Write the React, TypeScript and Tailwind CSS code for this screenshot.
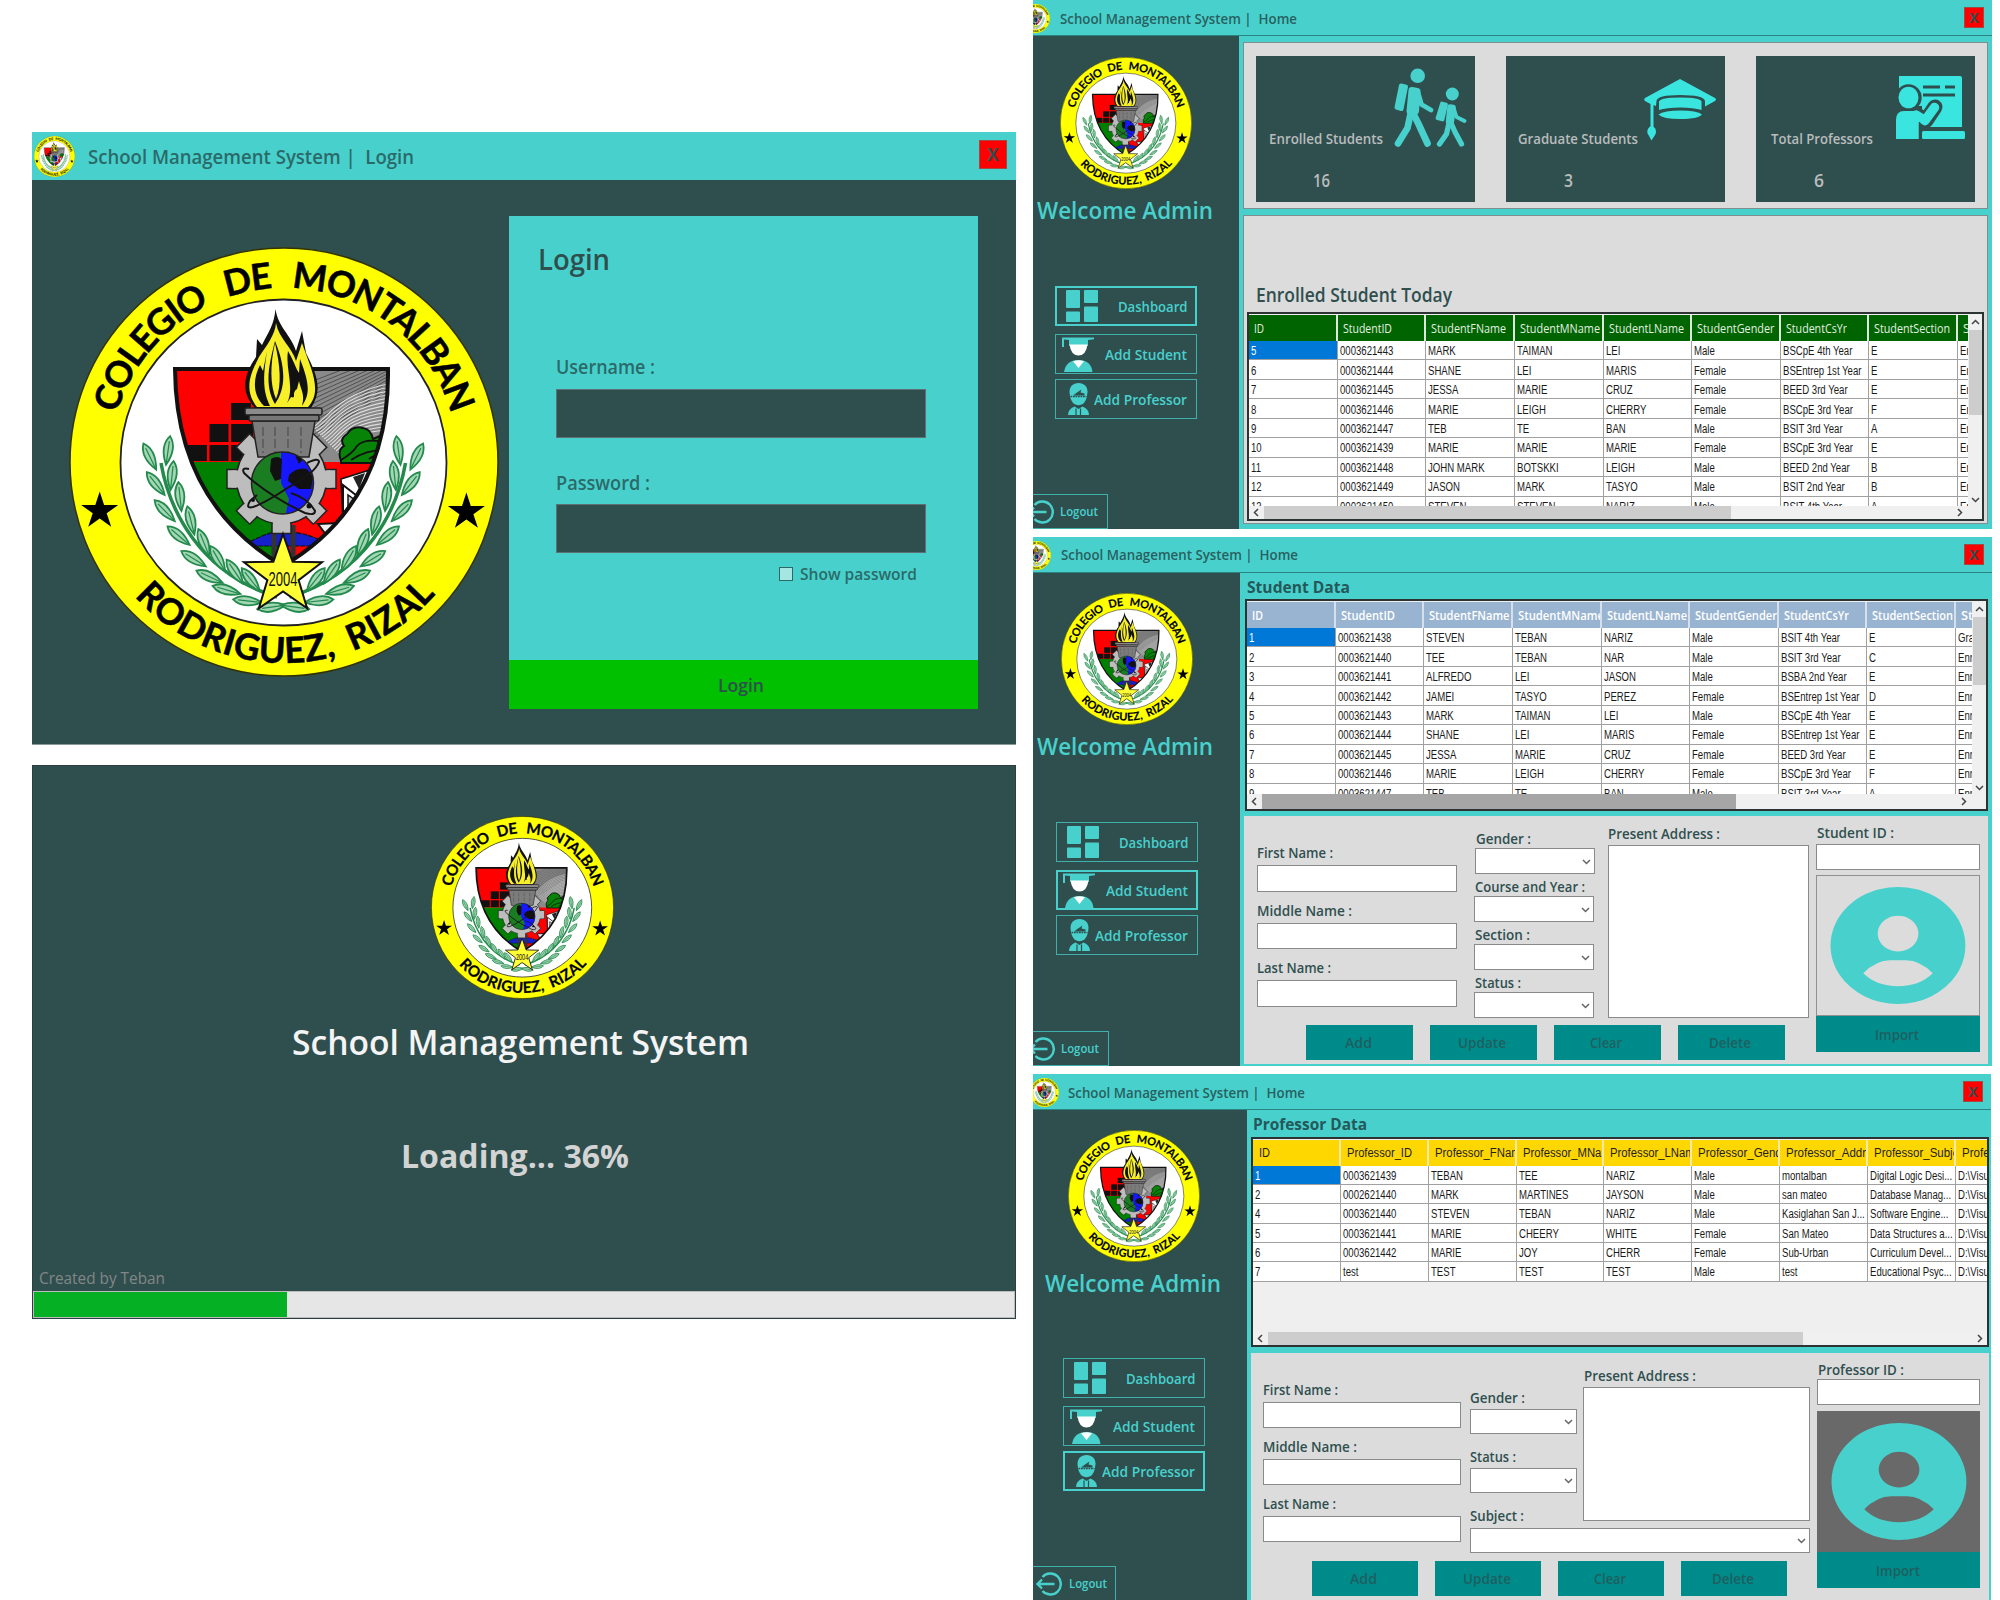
import React, { useLayoutEffect, useRef, useState } from "react";
import clsx from "clsx";

/* A single line of text squeezed or stretched to a given width. */
function Fit({ w, className, children }: { w: number; className?: string; children: React.ReactNode }) {
  const ref = useRef<HTMLSpanElement>(null);
  const [scale, setScale] = useState(1);
  useLayoutEffect(() => {
    if (ref.current && ref.current.offsetWidth) setScale(w / ref.current.getBoundingClientRect().width);
  }, []);
  return (
    <span className={clsx("block whitespace-pre", className)} style={{ width: w }}>
      <span ref={ref} className="inline-block origin-left" style={{ transform: `scaleX(${scale})` }}>
        {children}
      </span>
    </span>
  );
}

function starPoints(cx: number, cy: number, r: number, inner = 0.38) {
  return Array.from({ length: 10 }, (_, i) => {
    const a = -Math.PI / 2 + (i * Math.PI) / 5;
    const q = i % 2 ? r * inner : r;
    return `${(cx + q * Math.cos(a)).toFixed(1)},${(cy + q * Math.sin(a)).toFixed(1)}`;
  }).join(" ");
}

const LEAVES: [number, number, number][] = [
  [81, 210, 64], [87, 237, 52], [96, 264, 46], [110, 289, 40], [125, 312, 32], [141, 330, 25], [158, 343, 16], [179, 354, 6], [203, 360, -8],
  [99, 204, 98], [103, 229, 96], [111, 250, 84], [122, 274, 76], [135, 296, 68], [149, 312, 60], [166, 325, 56], [182, 333, 52],
];

function Laurel() {
  return (
    <g fill="#a2d6b4" stroke="#238a4c" strokeWidth="1.8">
      <path d="M92 216 C100 262 130 326 208 350" fill="none" strokeWidth="3.500" />
      {LEAVES.map(([x, y, a], i) => (
        <g key={i} transform={`translate(${x} ${y}) rotate(${a})`}>
          <path d="M-15 0 Q-4 -9 14 0 Q-4 9 -15 0Z" />
          <path d="M-10 0 H12" strokeWidth="1.200" />
        </g>
      ))}
    </g>
  );
}

const TEETH = Array.from({ length: 8 }, (_, i) => i * 45);

function Seal({ id, className }: { id: string; className?: string }) {
  return (
    <svg viewBox="0 0 430 430" className={clsx("block shrink-0", className)}>
      <defs>
        <path id={`${id}-top`} d="M41 215 A174 174 0 0 1 389 215" />
        <path id={`${id}-bottom`} d="M14 215 A201 201 0 0 0 416 215" />
        <clipPath id={`${id}-shield`}>
          <path d="M106 122 H319 Q321 256 214 319 Q107 256 106 122Z" />
        </clipPath>
        <clipPath id={`${id}-globe`}>
          <circle cx="213.500" cy="236" r="31" />
        </clipPath>
      </defs>
      <circle cx="215" cy="215" r="214" fill="#ffff00" stroke="#333300" strokeWidth="1.5" />
      <circle cx="214.500" cy="215.500" r="163" fill="#fff" stroke="#222" strokeWidth="1.8" />
      <g fontFamily="Lato, 'Open Sans', sans-serif" fontWeight="700" fontSize="36" fill="#000" stroke="#000" strokeWidth="0.5">
        <text textLength="449" lengthAdjust="spacing" wordSpacing="13">
          <textPath href={`#${id}-top`} startOffset="49">COLEGIO DE MONTALBAN</textPath>
        </text>
        <text textLength="340" lengthAdjust="spacing" wordSpacing="7">
          <textPath href={`#${id}-bottom`} startOffset="147">RODRIGUEZ, RIZAL</textPath>
        </text>
      </g>
      <polygon points={starPoints(30.700, 264, 19.500)} />
      <polygon points={starPoints(397.400, 265, 19.500)} />

      <Laurel />
      <g transform="translate(428.500 0) scale(-1 1)">
        <Laurel />
      </g>

      <g clipPath={`url(#${id}-shield)`}>
        <rect x="100" y="118" width="114" height="98" fill="#ff0000" />
        <rect x="100" y="215" width="114" height="110" fill="#008000" />
        <rect x="213" y="118" width="110" height="98" fill="#8a8a8a" />
        <rect x="213" y="215" width="110" height="110" fill="#ff0000" />
        <g fill="#111">
          <rect x="162" y="156" width="20" height="17" />
          <rect x="140.500" y="177" width="19" height="18" />
          <rect x="162" y="177" width="22" height="18" />
          <rect x="119" y="198" width="19" height="16" />
          <rect x="140.500" y="198" width="19" height="16" />
          <rect x="162" y="198" width="22" height="16" />
        </g>
        <g fill="none" stroke="#4a4a4a" strokeWidth="0.9">
          {Array.from({ length: 14 }, (_, i) => (
            <path key={i} d={`M244 ${134 + i * 4.500} L322 ${104 + i * 3}`} />
          ))}
        </g>
        <g fill="none" stroke="#dedede" strokeWidth="1.1">
          {Array.from({ length: 14 }, (_, i) => (
            <path key={i} d={`M${243 + i * 2} ${180 + i * 2} C${256 + i * 2} ${176 + i * 1.500} ${266 + i} ${146 + i * 3} ${324} ${136 + i * 3.600}`} />
          ))}
        </g>
        <path d="M272 214 Q268 203 275 199 Q270 192 278 187 Q284 178 294 181 Q302 182 304 192 L322 184 V216 H272Z" fill="#078307" stroke="#111" strokeWidth="2" />
        <path d="M272 213 Q284 206 288 199 Q296 190 320 196 M282 213 Q298 202 320 203 M300 212 Q308 206 320 209" fill="none" stroke="#111" strokeWidth="1.800" />
        <path d="M272 232 L304 222 L300 250 L274 274Z" fill="#fff" stroke="#111" strokeWidth="1.600" />
        <path d="M284 230 L296 226 L290 242Z" fill="#222" />
        <path d="M274 238 V268 L292 252Z" fill="#fff" stroke="#111" strokeWidth="2" />
        <path d="M279 248 V260 L286 253Z" fill="#ccc" stroke="#111" strokeWidth="1.500" />
        <path d="M249 277 L270 276 L258 289Z" fill="#eee" stroke="#111" strokeWidth="2" />
        <path d="M176 297 Q198 286 206 285 L222 285 Q236 286 254 294 L250 299 H178Z" fill="#1620cc" stroke="#111" strokeWidth="1.200" strokeDasharray="5 1" />
        <path d="M205 278 V320 M224 278 V320" stroke="#333" strokeWidth="5" />
      </g>
      <path d="M106 122 H319 Q321 256 214 319 Q107 256 106 122Z" fill="none" stroke="#111" strokeWidth="4" />

      <g fill="#bdbdbd" stroke="#222" strokeWidth="1.500">
        {TEETH.map((a) => (
          <rect key={a} x="203" y="177.500" width="19" height="16" transform={`rotate(${a} 212.500 232)`} />
        ))}
        <circle cx="212.500" cy="232" r="45" />
        {TEETH.map((a) => (
          <rect key={a} x="204" y="182" width="17" height="18" stroke="none" transform={`rotate(${a} 212.500 232)`} />
        ))}
      </g>
      <path d="M183 174 H246 L240 210 H189Z" fill="#7c7c7c" stroke="#222" strokeWidth="1.500" />
      <path d="M194 180 V206 M206 180 V208 M219 180 V208 M232 180 V206" stroke="#5a5a5a" strokeWidth="1.600" strokeDasharray="9 3" />
      <rect x="176" y="161" width="77" height="7" rx="2" fill="#8b8b8b" stroke="#222" strokeWidth="1.500" />
      <rect x="180" y="168" width="70" height="6" rx="2" fill="#777" stroke="#222" strokeWidth="1.500" />
      <g clipPath={`url(#${id}-globe)`}>
        <rect x="180" y="200" width="66" height="70" fill="#1b7d22" />
        <path d="M212 200 H250 V270 H216 L220 252 L212 236Z" fill="#1717ff" />
        <path d="M202 212 Q208 208 213 212 L212 232 L206 234 L201 224Z M220 228 Q228 220 238 222 L244 230 L242 242 L230 242 L219 234Z M226 208 L234 212 L230 217Z" fill="#111" />
      </g>
      <circle cx="213.500" cy="236" r="31" fill="none" stroke="#222" strokeWidth="1.500" />
      <g fill="none" stroke="#151515" strokeWidth="2">
        <path d="M180 222 Q172 220 175 226 Q198 248 236 266 Q246 269 246 264 Q240 252 222 246" />
        <path d="M238 216 Q250 210 250 215 Q246 226 220 240 Q196 256 184 260 Q176 262 181 254 L188 248" />
      </g>
      <circle cx="240" cy="259" r="2.500" fill="#111" />
      <circle cx="184" cy="253" r="2" fill="#111" />

      <path d="M186 161 C170 144 176 126 187 110 L188 92 L193 98 C200 84 205 78 206.500 62 C209 80 222 88 227 104 L233 84 L237 106 C248 128 254 142 242 161Z" fill="#111" />
      <path d="M188 160 C174 142 182 126 190 110 C198 98 206 88 207 76 C210 92 223 100 227 114 L233 96 C242 122 254 144 239 160Z" fill="#f6ef2a" />
      <path d="M195 159 C182 146 185 130 191 118 L194 124 L198 104 C193 136 195 146 201 159Z M206 157 C195 138 200 118 206 94 C216 118 218 140 206 157Z M218 156 C226 140 216 122 219 104 C226 116 226 120 230 126 L231 112 C242 140 240 148 233 159 C236 146 232 144 230 134 L228 142 C222 146 228 152 222 150Z" fill="#111" />
      <path d="M206 96 C201 118 201 138 207 152 C213 138 211 118 206 96Z" fill="#f6ef2a" />

      <polygon points={starPoints(214, 328, 41, 0.4)} fill="#ffff33" stroke="#111" strokeWidth="2" />
      <text x="214" y="338.500" textAnchor="middle" fontFamily="'Liberation Sans', sans-serif" fontSize="20" textLength="29" lengthAdjust="spacingAndGlyphs" fill="#111">
        2004
      </text>
    </svg>
  );
}

function DashboardIcon() {
  return (
    <svg viewBox="0 0 32 32" className="h-8 w-8" fill="#48d1cc">
      <rect width="14" height="18" rx="1" />
      <rect y="21.500" width="14" height="10.500" rx="1" />
      <rect x="18" width="14" height="13" rx="1" />
      <rect x="18" y="16.500" width="14" height="15.500" rx="1" />
    </svg>
  );
}

function StudentIcon() {
  return (
    <svg viewBox="0 0 32 35" className="h-[35px] w-8" fill="#48d1cc">
      <path d="M0 .5 H32 V2.200 L26 3 V9 H7 V3 L2 2.500 V10 H0Z" />
      <path d="M7.500 7.500 H25.500 Q24 18.500 16.500 18.500 Q9 18.500 7.500 7.500Z" fill="#fff" />
      <path d="M2 35 Q4 23 16.500 23 Q29 23 30.500 35Z" />
      <path d="M11 24.200 Q16.500 22.500 22 24.200 L16.500 31Z" fill="#fff" />
    </svg>
  );
}

function ProfessorIcon() {
  return (
    <svg viewBox="0 0 21 32" className="h-8 w-[21px]" fill="#48d1cc">
      <path d="M10.500 0 C16 0 19.500 3.500 19.500 9 Q19 17 15.500 20.500 Q10.500 24 5.500 20.500 Q2 17 1.500 9 C1.500 3.500 5 0 10.500 0Z" />
      <path d="M5 12.500 L9 9.500 L13.500 6.500 L12.500 9.500 L16.500 10.500 V12.500Z" fill="#2f4f4f" />
      <path d="M2.500 13.500 H18.500" fill="none" stroke="#2f4f4f" strokeWidth="1.600" strokeDasharray="1.800 .7" />
      <path d="M0 32 Q0 26 6.500 23.500 L10.500 26 L14.500 23.500 Q21 26 21 32Z" />
      <path d="M8 25.500 V32 M12.500 25.500 V32 M3.500 23 H6 M15 23 H17.500" stroke="#2f4f4f" strokeWidth="1.200" />
    </svg>
  );
}

function LogoutIcon() {
  return (
    <svg viewBox="0 0 26 24" className="h-6 w-[26px] shrink-0" fill="none" stroke="#48d1cc" strokeWidth="2.400">
      <path d="M6.500 5 A10.500 10.500 0 1 1 6.500 19" />
      <path d="M18.500 12 H1.500 M6 7.500 L1.500 12 L6 16.500" />
    </svg>
  );
}

function WalkersIcon() {
  return (
    <svg viewBox="0 0 73 79" className="h-[79px] w-[73px]" fill="#48d1cc" stroke="#48d1cc" strokeLinecap="round" strokeLinejoin="round">
      <circle cx="23.700" cy="7.800" r="7.300" stroke="none" />
      <path d="M7 17.500 L12 18.700 L7.500 41 L2.500 39.500Z" strokeWidth="4" />
      <path d="M18 22.500 L23 23.500 L21.500 43 L16 43Z" strokeWidth="7" />
      <path d="M23.500 23 L27.500 36.500 L37 42" fill="none" strokeWidth="4.800" />
      <path d="M19 45 L25 57 L33.500 75.500" fill="none" strokeWidth="6.800" />
      <path d="M16.500 46 L13.500 60 L4 75.500" fill="none" strokeWidth="6.600" />
      <circle cx="58.300" cy="26" r="6.500" stroke="none" />
      <path d="M48 35.500 L52 36.600 L48.500 51.500 L43.500 50.200Z" strokeWidth="3.800" />
      <path d="M56 39 L59 39.500 L57.500 53.500 L54.500 53.500Z" strokeWidth="5.400" />
      <path d="M59.500 39.500 L62.500 49 L70.500 53" fill="none" strokeWidth="3.800" />
      <path d="M57 55 L61 64 L67.500 76" fill="none" strokeWidth="5.300" />
      <path d="M55 55 L52.500 66 L45.500 76" fill="none" strokeWidth="5.300" />
    </svg>
  );
}

function CapIcon() {
  return (
    <svg viewBox="0 0 73 62" className="h-[62px] w-[73px]" fill="#3ae5e0">
      <path d="M36 0 L71 19 Q73 20.500 71 22 L61 27.500 V22 Q60 16 36 16 Q13 16 12.500 22 L12 27 L9.500 26 V48 H6.500 V25 L1 22 Q-0.500 20.500 1 19Z" />
      <path d="M15 22.500 Q17 18.500 36 18.500 Q56 18.500 57.500 22.500 V31 Q50 28.500 36.500 28.500 Q22 28.500 15 31Z" />
      <path d="M14.500 35.500 Q20 31.500 36.500 31.500 Q53 31.500 58 35.500 Q54 40 36.500 40 Q19 40 14.500 35.500Z" />
      <path d="M7.500 46.500 L11 49 Q13 53 11 56 L7.500 61.500 L4.500 56 Q2 53 4.500 49Z" />
    </svg>
  );
}

function TeacherIcon() {
  return (
    <svg viewBox="0 0 69 63" className="h-[63px] w-[69px]" fill="#3ae5e0">
      <path d="M3 0 H64 Q66 0 66 2 V52 H33 L27 45 H3Z" />
      <path d="M27 11 H44 M49 11 H59 M27 19 H59" stroke="#2f4f4f" strokeWidth="2.800" />
      <rect x="0" y="30" width="26" height="33" fill="#2f4f4f" />
      <circle cx="12.500" cy="21.500" r="13.200" fill="#2f4f4f" />
      <ellipse cx="12.500" cy="21.500" rx="10" ry="10.800" />
      <path d="M21 39 L30 44.500 L39 31" fill="none" stroke="#2f4f4f" strokeWidth="15" strokeLinecap="round" strokeLinejoin="round" />
      <path d="M20 39 L29 44.500 L38.500 31.500" fill="none" stroke="#3ae5e0" strokeWidth="9.500" strokeLinecap="round" strokeLinejoin="round" />
      <path d="M0 44 Q0 35 8 35 H18 L23 40 V63 H0Z" />
      <path d="M23.500 46 V63" stroke="#2f4f4f" strokeWidth="1.500" />
      <rect x="23" y="51" width="46" height="4" fill="#2f4f4f" />
      <rect x="26" y="55" width="43" height="8" rx="1.500" />
    </svg>
  );
}

function Chevron({ dir, className }: { dir: "left" | "right" | "up" | "down"; className?: string }) {
  const d = { left: "M6 1 L2.500 4.500 L6 8", right: "M3 1 L6.500 4.500 L3 8", up: "M1 6 L4.500 2.500 L8 6", down: "M1 3 L4.500 6.500 L8 3" }[dir];
  return (
    <svg viewBox="0 0 9 9" className={clsx("h-[9px] w-[9px] shrink-0", className)} fill="none" stroke="currentColor" strokeWidth="1.500">
      <path d={d} />
    </svg>
  );
}

function CloseButton({ className }: { className?: string }) {
  return (
    <button className={clsx("flex items-center justify-center border border-[#a04a42] bg-[#ff0000] font-bold text-[#2f4f4f]", className)}>X</button>
  );
}

function LoginWindow() {
  return (
    <section className="flex h-[613px] w-[984px] flex-col border-b border-[#8a9a9a] bg-[#2f4f4f]">
      <header className="flex h-12 shrink-0 bg-[#48d1cc]">
        <Seal id="login-icon" className="mt-[4px] ml-[2px] h-[41px] w-[41px]" />
        <Fit w={326} className="mt-[9px] ml-[13px] text-[19px] leading-[32px] font-semibold text-[#2b6a69]">
          {"School Management System |  Login"}
        </Fit>
        <CloseButton className="mt-[8px] mr-[9px] ml-auto h-[29px] w-[28px] text-[17px]" />
      </header>
      <div className="flex">
        <Seal id="login-seal" className="mt-[67px] ml-[37px] h-[430px] w-[430px]" />
        <div className="mt-[36px] ml-[10px] flex h-[493px] w-[469px] flex-col bg-[#48d1cc]">
          <Fit w={72} className="mt-[23px] ml-[29px] text-[29px] leading-[40px] font-semibold">Login</Fit>
          <div className="mt-[72px] ml-[47px] w-[370px]">
            <Fit w={99} className="text-[19px] leading-[32px] font-semibold text-[#2b6a69]">Username :</Fit>
            <div className="mt-[6px] h-[49px] border border-[#5f6f74] bg-[#2f4f4f]" />
            <Fit w={94} className="mt-[29px] text-[19px] leading-[32px] font-semibold text-[#2b6a69]">Password :</Fit>
            <div className="mt-[5px] h-[49px] border border-[#5f6f74] bg-[#2f4f4f]" />
            <div className="mt-[8px] ml-[223px] flex items-center gap-[7px]">
              <span className="h-[14px] w-[14px] border-[1.500px] border-[#2b6a69] bg-[#a5e6e3]" />
              <Fit w={117} className="text-[17px] leading-[26px] font-semibold text-[#2b6a69]">Show password</Fit>
            </div>
          </div>
          <button className="mt-auto flex h-[49px] items-center justify-center bg-[#00c000]">
            <Fit w={46} className="mr-[5px] text-[18px] leading-[32px] font-semibold">Login</Fit>
          </button>
        </div>
      </div>
    </section>
  );
}

function SplashWindow() {
  return (
    <section className="flex h-[554px] w-[984px] flex-col border border-[#2a3f3f] bg-[#2f4f4f]">
      <Seal id="splash-seal" className="mt-[50px] ml-[398px] h-[183px] w-[183px]" />
      <Fit w={457} className="mt-[18px] ml-[259px] text-[34px] leading-[50px] font-semibold text-[#f4f4f4]">School Management System</Fit>
      <Fit w={228} className="mt-[65px] ml-[368px] text-[32px] leading-[48px] font-bold text-[#d3d3d3]">Loading... 36%</Fit>
      <Fit w={126} className="mt-[85px] ml-[6px] text-[16.500px] leading-[26px] text-[#828686]">Created by Teban</Fit>
      <div className="mt-auto h-[29px] border border-[#bcbcbc] bg-[#e6e6e6]">
        <div className="h-full w-[253px] bg-[#06b025]" />
      </div>
    </section>
  );
}

type NavKey = "dashboard" | "student" | "professor" | "";

function NavButton({ icon, label, w, active, iconClass, className }: { icon: React.ReactNode; label: string; w: number; active: boolean; iconClass: string; className?: string }) {
  return (
    <button
      className={clsx(
        "flex h-[40px] w-[142px] items-center justify-between",
        active ? "border-2 border-[#48d1cc] pr-[8px]" : "border border-[#3fb0ac] pr-[9px]",
        className,
      )}
    >
      <span className={clsx(iconClass, active && "-translate-x-px")}>{icon}</span>
      <Fit w={w} className="pt-px text-left text-[14px] leading-[20px] font-semibold text-[#48d1cc]">{label}</Fit>
    </button>
  );
}

function HomeWindow({
  id, active, className, iconClass, titleClass, sideClass, navClass, logoutClass, logoutText, children,
}: {
  id: string; active: NavKey; className: string; iconClass: string; titleClass: string; sideClass: string; navClass: string; logoutClass: string; logoutText: string; children: React.ReactNode;
}) {
  return (
    <section className={clsx("flex shrink-0 flex-col overflow-hidden bg-[#48d1cc]", className)}>
      <header className="flex h-9 shrink-0 border-b border-[#2a8380]">
        <Seal id={`${id}-icon`} className={clsx("mt-[4px] h-[29px] w-[29px]", iconClass)} />
        <Fit w={237} className={clsx("text-[14px] leading-[20px] font-semibold text-[#29605f]", titleClass)}>
          {"School Management System |  Home"}
        </Fit>
        <CloseButton className="mt-[7px] mr-[8px] ml-auto h-[21px] w-[20px] text-[14px]" />
      </header>
      <div className="flex grow">
        <aside className={clsx("flex shrink-0 flex-col overflow-hidden bg-[#2f4f4f]", sideClass)}>
          <Seal id={`${id}-seal`} className="mt-[20px] ml-[27px] h-[132px] w-[132px]" />
          <Fit w={176} className="mt-[4px] ml-[4px] text-[23px] leading-[34px] font-semibold text-[#48d1cc]">Welcome Admin</Fit>
          <nav className={clsx("ml-[22px] flex flex-col", navClass)}>
            <NavButton icon={<DashboardIcon />} label="Dashboard" w={69.5} active={active === "dashboard"} iconClass="ml-[10px]" />
            <NavButton icon={<StudentIcon />} label="Add Student" w={82} active={active === "student"} iconClass="ml-[6px]" className="mt-[8px]" />
            <NavButton icon={<ProfessorIcon />} label="Add Professor" w={93} active={active === "professor"} iconClass="ml-[12px]" className="mt-[5px]" />
          </nav>
          <div className={clsx("mt-auto flex h-[35px] items-center border-y border-r border-[#3fb0ac]", logoutClass)}>
            <LogoutIcon />
            <Fit w={38} className={clsx("-mt-[2px] text-[13px] leading-[20px] font-semibold text-[#48d1cc]", logoutText)}>Logout</Fit>
          </div>
        </aside>
        {children}
      </div>
    </section>
  );
}

type GridProps = {
  heads: [string, number][];
  rows: string[][];
  className: string;
  headClass: string;
  sepClass: string;
  cols: string;
  rowClass: string;
  bodyClass: string;
  hThumb: string;
  vThumb?: string;
};

function DataGrid({ heads, rows, className, headClass, sepClass, cols, rowClass, bodyClass, hThumb, vThumb }: GridProps) {
  return (
    <div className={clsx("flex flex-col overflow-hidden border-2 border-[#2b3333] bg-[#efefef] pt-px text-black", className)}>
      <div className={clsx("flex", bodyClass)}>
        <div className="grow overflow-hidden">
          <div className={clsx("grid", headClass, cols)}>
            {heads.map(([h, w], i) => (
              <div key={i} className={clsx("flex items-center overflow-hidden border-r-2", sepClass)}>
                <div className="overflow-hidden">
                  <Fit w={w}>{h}</Fit>
                </div>
              </div>
            ))}
          </div>
          {rows.map((row, r) => (
            <div key={r} className={clsx("grid border-b border-[#a0a0a0] bg-white", cols, rowClass)}>
              {row.map((c, i) => (
                <div
                  key={i}
                  className={clsx(
                    "flex items-center overflow-hidden border-r border-[#a0a0a0] pl-[2px] font-[Liberation_Sans,Arial,sans-serif] text-[12px] leading-[18px]",
                    r === 0 && i === 0 ? "bg-[#0078d7] text-white" : "text-[#1a1a1a]",
                  )}
                >
                  <span className="origin-left translate-y-px scale-x-[0.8] whitespace-nowrap">{c}</span>
                </div>
              ))}
            </div>
          ))}
        </div>
        {vThumb && (
          <div className="flex w-[14px] shrink-0 flex-col items-center bg-[#f0f0f0] text-[#444]">
            <Chevron dir="up" className="my-[3px]" />
            <div className={clsx("w-[13px] bg-[#cdcdcd]", vThumb)} />
            <Chevron dir="down" className="mt-auto mb-[2px]" />
          </div>
        )}
      </div>
      <div className="flex grow items-center bg-[#f0f0f0] text-[#444]">
        <Chevron dir="left" className="mx-[3px]" />
        <div className={clsx("h-full", hThumb)} />
        <Chevron dir="right" className={clsx("ml-auto", vThumb ? "mr-[18px]" : "mr-[3px]")} />
      </div>
    </div>
  );
}

function Label({ w, children, className }: { w: number; children: React.ReactNode; className?: string }) {
  return <Fit w={w} className={clsx("pt-[2px] text-[14px] leading-[18px] font-semibold", className)}>{children}</Fit>;
}

function Box({ className, select }: { className: string; select?: boolean }) {
  return (
    <div className={clsx("flex items-center justify-end border border-[#8a8a8a] bg-white pr-[3px] text-[#666]", className)}>
      {select && <Chevron dir="down" />}
    </div>
  );
}

function ActionButton({ label, w, className }: { label: string; w: number; className: string }) {
  return (
    <button className={clsx("flex items-center justify-center bg-[#008b8b]", className)}>
      <Fit w={w} className="mr-[2px] pt-px text-[14px] leading-[20px] font-semibold text-[#1f5f5f]">{label}</Fit>
    </button>
  );
}

function Avatar({ className }: { className: string }) {
  return (
    <div className={clsx("flex items-center justify-center", className)}>
      <svg viewBox="0 0 136 118" className="h-[117px] w-[136px]">
        <path
          fillRule="evenodd"
          fill="#48d1cc"
          d="M68 0 A68 59 0 1 1 67.900 0Z M68 29 A20.500 18 0 1 0 68.100 29Z M33 87 Q46 74 60 74 H76 Q90 74 103 87 Q90 100 68 100 Q46 100 33 87Z"
        />
      </svg>
    </div>
  );
}

function Actions({ className, btn }: { className: string; btn: string }) {
  return (
    <div className={clsx("flex", className)}>
      <ActionButton label="Add" w={27} className={btn} />
      <ActionButton label="Update" w={48} className={btn} />
      <ActionButton label="Clear" w={32} className={btn} />
      <ActionButton label="Delete" w={42} className={btn} />
    </div>
  );
}

const NAMES_TODAY: [string, number][] = [
  ["ID", 10], ["StudentID", 49], ["StudentFName", 75], ["StudentMName", 80], ["StudentLName", 75], ["StudentGender", 77.5], ["StudentCsYr", 61], ["StudentSection", 76], ["Status", 35],
];
const NAMES_DATA: [string, number][] = [
  ["ID", 11], ["StudentID", 54], ["StudentFName", 80.5], ["StudentMName", 86], ["StudentLName", 80], ["StudentGender", 82], ["StudentCsYr", 65], ["StudentSection", 81], ["Status", 39],
];
const NAMES_PROF: [string, number][] = [
  ["ID", 11], ["Professor_ID", 65], ["Professor_FName", 92], ["Professor_MName", 94], ["Professor_LName", 91], ["Professor_Gender", 94], ["Professor_Address", 98], ["Professor_Subject", 94], ["Professor_Image", 88],
];

const TODAY = [
  ["5", "0003621443", "MARK", "TAIMAN", "LEI", "Male", "BSCpE 4th Year", "E", "Enrolled"],
  ["6", "0003621444", "SHANE", "LEI", "MARIS", "Female", "BSEntrep 1st Year", "E", "Enrolled"],
  ["7", "0003621445", "JESSA", "MARIE", "CRUZ", "Female", "BEED 3rd Year", "E", "Enrolled"],
  ["8", "0003621446", "MARIE", "LEIGH", "CHERRY", "Female", "BSCpE 3rd Year", "F", "Enrolled"],
  ["9", "0003621447", "TEB", "TE", "BAN", "Male", "BSIT 3rd Year", "A", "Enrolled"],
  ["10", "0003621439", "MARIE", "MARIE", "MARIE", "Female", "BSCpE 3rd Year", "E", "Enrolled"],
  ["11", "0003621448", "JOHN MARK", "BOTSKKI", "LEIGH", "Male", "BEED 2nd Year", "B", "Enrolled"],
  ["12", "0003621449", "JASON", "MARK", "TASYO", "Male", "BSIT 2nd Year", "B", "Enrolled"],
  ["13", "0003621450", "STEVEN", "STEVEN", "NARIZ", "Male", "BSIT 4th Year", "A", "Enrolled"],
];
const STUDENTS = [
  ["1", "0003621438", "STEVEN", "TEBAN", "NARIZ", "Male", "BSIT 4th Year", "E", "Graduate"],
  ["2", "0003621440", "TEE", "TEBAN", "NAR", "Male", "BSIT 3rd Year", "C", "Enrolled"],
  ["3", "0003621441", "ALFREDO", "LEI", "JASON", "Male", "BSBA 2nd Year", "E", "Enrolled"],
  ["4", "0003621442", "JAMEI", "TASYO", "PEREZ", "Female", "BSEntrep 1st Year", "D", "Enrolled"],
  ["5", "0003621443", "MARK", "TAIMAN", "LEI", "Male", "BSCpE 4th Year", "E", "Enrolled"],
  ["6", "0003621444", "SHANE", "LEI", "MARIS", "Female", "BSEntrep 1st Year", "E", "Enrolled"],
  ["7", "0003621445", "JESSA", "MARIE", "CRUZ", "Female", "BEED 3rd Year", "E", "Enrolled"],
  ["8", "0003621446", "MARIE", "LEIGH", "CHERRY", "Female", "BSCpE 3rd Year", "F", "Enrolled"],
  ["9", "0003621447", "TEB", "TE", "BAN", "Male", "BSIT 3rd Year", "A", "Enrolled"],
];
const PROFESSORS = [
  ["1", "0003621439", "TEBAN", "TEE", "NARIZ", "Male", "montalban", "Digital Logic Desi...", "D:\\Visual"],
  ["2", "0002621440", "MARK", "MARTINES", "JAYSON", "Male", "san mateo", "Database Manag...", "D:\\Visual"],
  ["4", "0003621440", "STEVEN", "TEBAN", "NARIZ", "Male", "Kasiglahan San J...", "Software Engine...", "D:\\Visual"],
  ["5", "0003621441", "MARIE", "CHEERY", "WHITE", "Female", "San Mateo", "Data Structures a...", "D:\\Visual"],
  ["6", "0003621442", "MARIE", "JOY", "CHERR", "Female", "Sub-Urban", "Curriculum Devel...", "D:\\Visual"],
  ["7", "test", "TEST", "TEST", "TEST", "Male", "test", "Educational Psyc...", "D:\\Visual"],
];

function StatCard({ label, w, value, vw, labelPad, valuePad, icon, iconClass }: { label: string; w: number; value: string; vw: number; labelPad: string; valuePad: string; icon: React.ReactNode; iconClass: string }) {
  return (
    <div className="flex h-[146px] w-[219px] justify-between overflow-hidden bg-[#2f4f4f] text-[#b9bcbc]">
      <div className="pt-[73px]">
        <Fit w={w} className={clsx("text-[14px] leading-[20px] font-semibold", labelPad)}>{label}</Fit>
        <Fit w={vw} className={clsx("mt-[18px] text-[18px] leading-[26px] font-semibold", valuePad)}>{value}</Fit>
      </div>
      <div className={iconClass}>{icon}</div>
    </div>
  );
}

function Dashboard() {
  return (
    <main className="flex flex-col pt-[6px] pl-[4px]">
      <div className="flex h-[167px] w-[745px] gap-[31px] border border-[#7f8f8f] bg-[#dcdcdc] pt-[13px] pl-[12px]">
        <StatCard label="Enrolled Students" w={114} value="16" vw={17} labelPad="ml-[13px]" valuePad="ml-[57px]" icon={<WalkersIcon />} iconClass="mt-[12px] mr-[8px] -ml-[20px]" />
        <StatCard label="Graduate Students" w={120} value="3" vw={9} labelPad="ml-[12px]" valuePad="ml-[58px]" icon={<CapIcon />} iconClass="mt-[23px] mr-[8px] -ml-[20px]" />
        <StatCard label="Total Professors" w={102} value="6" vw={10} labelPad="ml-[15px]" valuePad="ml-[58px]" icon={<TeacherIcon />} iconClass="mt-[20px] mr-[10px]" />
      </div>
      <div className="mt-[6px] h-[309px] w-[745px] border border-[#7f8f8f] bg-[#dcdcdc]">
        <Fit w={196} className="mt-[64px] ml-[12px] text-[19px] leading-[30px] font-semibold">Enrolled Student Today</Fit>
        <DataGrid
          heads={NAMES_TODAY}
          rows={TODAY}
          className="mt-[2px] ml-[3px] h-[209px] w-[737px]"
          bodyClass="h-[191px]"
          headClass="h-[26px] bg-[#006400] text-[12px] leading-[18px] text-[#e4f0e4]"
          sepClass="border-[#dfe8df] pl-[5px] pt-[2px]"
          cols="w-[798px] grid-cols-[repeat(9,88.65px)]"
          rowClass="h-[19.45px]"
          hThumb="w-[467px] bg-[#cdcdcd]"
          vThumb="h-[85px]"
        />
      </div>
    </main>
  );
}

function StudentPage() {
  return (
    <main className="flex flex-col">
      <Fit w={103} className="mt-[2px] ml-[7px] text-[16px] leading-[24px] font-bold text-[#24585a]">Student Data</Fit>
      <DataGrid
        heads={NAMES_DATA}
        rows={STUDENTS}
        className="ml-[5px] h-[212px] w-[743px]"
        bodyClass="h-[192px]"
        headClass="h-[26px] bg-[#99b4d1] text-[12px] leading-[18px] font-semibold text-white"
        sepClass="border-[#d5e0ec] pl-[5px] pt-px"
        cols="w-[798px] grid-cols-[repeat(9,88.65px)]"
        rowClass="h-[19.45px]"
        hThumb="w-[474px] bg-[#a6a6a6]"
        vThumb="h-[68px]"
      />
      <div className="mt-[5px] ml-[4px] flex h-[248px] w-[744px] bg-[#dcdcdc]">
        <div>
          <div className="flex h-[209px]">
            <div className="ml-[13px] flex w-[200px] flex-col pt-[26px]">
              <Label w={76}>First Name :</Label>
              <Box className="mt-[3px] h-[26.500px]" />
              <Label w={95} className="mt-[8px]">Middle Name :</Label>
              <Box className="mt-[3px] h-[26.500px]" />
              <Label w={74} className="mt-[8px]">Last Name :</Label>
              <Box className="mt-[3px] h-[26.500px]" />
            </div>
            <div className="ml-[17px] flex w-[120px] flex-col pt-[12px]">
              <Label w={55} className="ml-[2px]">Gender :</Label>
              <Box select className="ml-px h-[26px] w-full" />
              <Label w={110} className="mt-[2px] ml-px">Course and Year :</Label>
              <Box select className="h-[26px]" />
              <Label w={55} className="mt-[2px] ml-px">Section :</Label>
              <Box select className="h-[26px]" />
              <Label w={46} className="mt-[2px] ml-px">Status :</Label>
              <Box select className="h-[26px]" />
            </div>
            <div className="ml-[14px] flex w-[201px] flex-col pt-[7px]">
              <Label w={112}>Present Address :</Label>
              <Box className="mt-[2px] h-[173px]" />
            </div>
          </div>
          <Actions className="ml-[62px] gap-[17.500px]" btn="h-[35px] w-[106.500px]" />
        </div>
        <div className="ml-[7px] flex w-[164px] flex-col pt-[6px]">
          <Label w={77} className="ml-px">Student ID :</Label>
          <Box className="mt-[2px] h-[26px]" />
          <Avatar className="mt-[5px] h-[141px] border border-[#909090]" />
          <ActionButton label="Import" w={44} className="h-[36px]" />
        </div>
      </div>
    </main>
  );
}

function ProfessorPage() {
  return (
    <main className="flex flex-col">
      <Fit w={114} className="mt-[2px] ml-[6px] text-[16px] leading-[24px] font-bold text-[#24585a]">Professor Data</Fit>
      <DataGrid
        heads={NAMES_PROF}
        rows={PROFESSORS}
        className="mt-px ml-[4px] h-[210px] w-[738px]"
        bodyClass="h-[192px]"
        headClass="h-[25.500px] bg-[#ffd700] font-[Liberation_Sans,Arial,sans-serif] text-[12.500px] leading-[18px] text-[#222]"
        sepClass="border-[#f3e9b0] pl-[6px]"
        cols="w-[791px] grid-cols-[repeat(9,87.85px)]"
        rowClass="h-[19.35px]"
        hThumb="w-[535px] bg-[#cdcdcd]"
      />
      <div className="mt-[6px] ml-[4px] flex h-[247px] w-[738px] bg-[#dcdcdc]">
        <div>
          <div className="flex h-[207.500px]">
            <div className="ml-[12px] flex w-[198px] flex-col pt-[26px]">
              <Label w={75}>First Name :</Label>
              <Box className="mt-[3px] h-[26px]" />
              <Label w={94} className="mt-[8px]">Middle Name :</Label>
              <Box className="mt-[3px] h-[26px]" />
              <Label w={73} className="mt-[8px]">Last Name :</Label>
              <Box className="mt-[3px] h-[26px]" />
            </div>
            <div className="ml-[9px] flex w-[340px] flex-col pt-[12px]">
              <div className="flex h-[163px]">
                <div className="w-[107px] pt-[22px]">
                  <Label w={55}>Gender :</Label>
                  <Box select className="mt-[2px] h-[25px]" />
                  <Label w={46} className="mt-[12px]">Status :</Label>
                  <Box select className="mt-[2px] h-[25px]" />
                  <Label w={54} className="mt-[12px]">Subject :</Label>
                </div>
                <div className="ml-[6px] grow">
                  <Label w={112} className="ml-px">Present Address :</Label>
                  <Box className="mt-[2px] h-[134px]" />
                </div>
              </div>
              <Box select className="h-[25px] shrink-0" />
            </div>
          </div>
          <Actions className="ml-[61px] gap-[17.500px]" btn="h-[35px] w-[105.500px]" />
        </div>
        <div className="ml-[7px] flex w-[163px] flex-col pt-[6px]">
          <Label w={86} className="ml-px">Professor ID :</Label>
          <Box className="h-[26px]" />
          <Avatar className="mt-[6px] h-[141px] bg-[#696969]" />
          <ActionButton label="Import" w={44} className="h-[36px]" />
        </div>
      </div>
    </main>
  );
}

export default function App() {
  return (
    <div className="flex h-[1600px] w-[2000px] overflow-hidden bg-white font-[Open_Sans,Noto_Sans,sans-serif] text-[#2f4f4f]">
      <div className="flex w-[1033px] shrink-0 flex-col gap-[20px] pt-[132px] pl-[32px]">
        <LoginWindow />
        <SplashWindow />
      </div>
      <div className="flex flex-col">
        <HomeWindow
          id="dash" active="dashboard" className="h-[529px] w-[959px]" iconClass="-ml-[12px]" titleClass="mt-[9px] ml-[10px]"
          sideClass="w-[206px] pt-px" navClass="mt-[59px]" logoutClass="w-[75px] [&>svg]:-ml-[5px]" logoutText="ml-[6px]"
        >
          <Dashboard />
        </HomeWindow>
        <HomeWindow
          id="stud" active="student" className="mt-[8px] h-[529px] w-[959px]" iconClass="-ml-[11px]" titleClass="mt-[8px] ml-[10px]"
          sideClass="w-[207px] [&>svg]:translate-x-px [&>nav]:translate-x-px" navClass="mt-[59px]" logoutClass="w-[76px] [&>svg]:-ml-[4px]" logoutText="ml-[6px]"
        >
          <StudentPage />
        </HomeWindow>
        <HomeWindow
          id="prof" active="professor" className="mt-[8px] h-[534px] w-[958px]" iconClass="-ml-[3px]" titleClass="mt-[9px] ml-[9px]"
          sideClass="w-[214px] pl-[8px] pb-[7px]" navClass="mt-[58px]" logoutClass="-ml-[8px] w-[83px] [&>svg]:ml-[3px]" logoutText="ml-[7px]"
        >
          <ProfessorPage />
        </HomeWindow>
      </div>
    </div>
  );
}
